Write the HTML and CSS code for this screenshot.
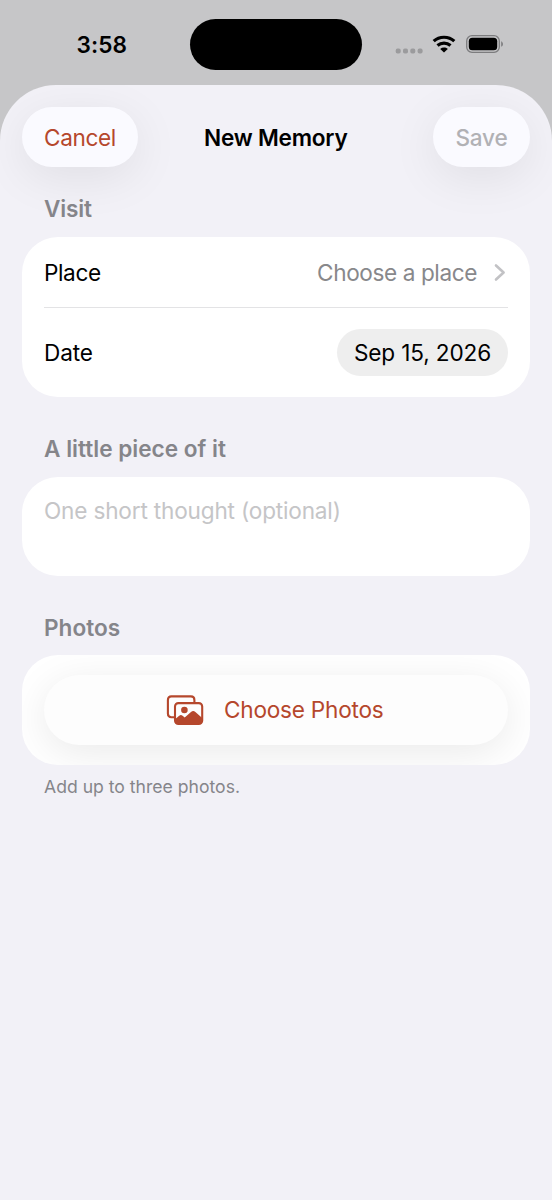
FILE: index.html
```
<!DOCTYPE html>
<html lang="en">
<head>
<meta charset="utf-8">
<title>New Memory</title>
<link rel="stylesheet" href="styles.css">
</head>
<body>
<div class="screen">
  <header class="status">
    <div class="time">3:58</div>
    <div class="island"></div>
    <div class="indicators">
      <svg class="dots" width="28" height="6" viewBox="0 0 28 6" fill="#9b9b9d"><rect x="0.7" y="0.6" width="5" height="5" rx="1.8"/><rect x="8" y="0.6" width="5" height="5" rx="1.8"/><rect x="15.3" y="0.6" width="5" height="5" rx="1.8"/><rect x="22.6" y="0.6" width="5" height="5" rx="1.8"/></svg>
      <svg class="wifi" width="24" height="18" viewBox="0 0 24 18"><g fill="none" stroke="#000" stroke-width="3.2"><path d="M1.7 6.2C7.4.9 16.6.9 22.3 6.2"/><path d="M5.5 10.5c3.7-3.2 9.3-3.2 13 0"/></g><path d="M12 17.6l-3.8-3.7c2.2-1.8 5.4-1.8 7.6 0z"/></svg>
      <svg class="battery" width="38" height="18" viewBox="0 0 38 18"><rect x=".7" y=".7" width="32.6" height="16.6" rx="5.3" fill="none" stroke="#7c7c7e" stroke-width="1.3"/><rect x="2.8" y="2.8" width="28.4" height="12.4" rx="3.5"/><path d="M35.2 6.2c2.3 1 2.3 4.6 0 5.6z" fill="#7c7c7e"/></svg>
    </div>
  </header>
  <main class="sheet">
    <nav class="toolbar">
      <button class="glass cancel"><span>Cancel</span></button>
      <h1 class="title">New Memory</h1>
      <button class="glass save"><span>Save</span></button>
    </nav>
    <section class="group visit">
      <h2 class="label l-visit">Visit</h2>
      <div class="card">
        <div class="row place">
          <span class="t-place">Place</span>
          <span class="value">Choose a place</span>
          <svg class="chevron" width="12" height="20" viewBox="0 0 12 20" fill="none" stroke="#c2c2c5" stroke-width="2.6" stroke-linecap="round" stroke-linejoin="round"><path d="M2 2.5l7.6 7L2 16.5"/></svg>
        </div>
        <div class="row date"><span class="t-date">Date</span><span class="pill"><span>Sep 15, 2026</span></span></div>
      </div>
    </section>
    <section class="group piece">
      <h2 class="label l-piece">A little piece of it</h2>
      <div class="card thought"><span>One short thought (optional)</span></div>
    </section>
    <section class="group photos">
      <h2 class="label l-photos">Photos</h2>
      <div class="card picker">
        <button class="choose">
          <svg class="photo-icon" width="38" height="32" viewBox="0 0 38 32"><path d="M8 23.2H5.4c-2.3 0-3.5-1.2-3.5-3.5V5.9c0-2.3 1.2-3.5 3.5-3.5h19.5c2.3 0 3.5 1.2 3.5 3.5v3.2" fill="none" stroke="#b5472c" stroke-width="2.1"/><rect x="9" y="9.1" width="27.2" height="20.8" rx="3.4" fill="none" stroke="#b5472c" stroke-width="2.1"/><circle cx="18.4" cy="16" r="3.3" fill="#b5472c"/><path d="M9 25.2l4.2-3.5c1.2-1 2.2-1 3.4 0l2.1 1.8 6.3-5.5c1.6-1.3 2.8-1.3 4.4 0l6.8 6v2.7c0 2.3-1 3.2-3.2 3.2H12.2c-2.2 0-3.2-.9-3.2-3.2z" fill="#b5472c"/></svg>
          <span>Choose Photos</span>
        </button>
      </div>
      <p class="footer">Add up to three photos.</p>
    </section>
  </main>
</div>
</body>
</html>
```
FILE: styles.css
```
* { box-sizing: border-box; }
body {
  margin: 0;
  background: #c6c6c8;
  color: #000;
  font: 400 22.6px/30px Inter, "Liberation Sans", sans-serif;
}
h1, h2, p { margin: 0; font-size: inherit; }
button { border: 0; padding: 0; font: inherit; }
span, h1, h2, p { white-space: nowrap; }
.screen { width: 552px; height: 1200px; overflow: hidden; display: flex; flex-direction: column; }
.status {
  height: 85px;
  flex: none;
  padding: 19px 48px 0 76.5px;
  display: grid;
  grid-template-columns: 113.5px 172px 1fr;
  align-items: start;
}
.time { font-weight: 600; line-height: 52px; letter-spacing: .1px; }
.island { height: 51px; border-radius: 26px; background: #000; }
.indicators { display: flex; justify-content: flex-end; padding-top: 16px; }
.dots { margin: 12.5px 9px 0 0; }
.wifi { margin: 0 10px 0 0; }
.battery { margin-top: .3px; }
.sheet {
  flex: 1;
  background: #f2f1f7;
  border-radius: 56px 56px 0 0;
  padding: 22px 22px 0;
  overflow: hidden;
}
.toolbar { height: 60px; display: grid; grid-template-columns: 116px 1fr 97px; align-items: center; }
.title { font-weight: 600; padding: 2px 0 0 66px; letter-spacing: -.22px; }
.glass {
  height: 60px;
  border-radius: 30px;
  background: #fafaff;
  box-shadow: 0 10px 48px rgba(0, 0, 0, .08);
  padding-top: 2px;
}
.cancel { color: #b5472c; letter-spacing: -.35px; }
.save { color: #b1b1b5; font-weight: 500; letter-spacing: -.2px; }
.group { display: flex; flex-direction: column; }
.label { color: #85858a; font-weight: 600; padding-left: 22px; height: 30px; }
.l-visit { letter-spacing: -.2px; }
.visit { padding-top: 27px; }
.card { background: #fff; border-radius: 36px; margin-top: 13px; padding: 0 22px; }
.visit .card { height: 159.5px; }
.row { display: flex; align-items: center; }
.place { height: 71px; padding-top: 1px; border-bottom: 1px solid #e3e3e5; letter-spacing: -.4px; }
.place span { padding-top: 1px; }
.value { color: #88888b; margin-left: auto; }
.chevron { margin: 0 2px 0 17px; }
.date { height: 89px; justify-content: space-between; letter-spacing: -.15px; }
.pill { width: 171px; height: 47px; border-radius: 24px; background: #eee; display: flex; align-items: center; justify-content: center; }
.piece { padding-top: 37px; }
.thought { height: 99px; padding-top: 19px; color: #c5c5c7; letter-spacing: -.18px; }
.photos { padding-top: 37px; }
.picker { height: 110px; margin-top: 12.5px; padding: 19.5px 22px; overflow: hidden; }
.choose {
  width: 464px;
  height: 70px;
  border-radius: 35px;
  background: #fdfdfd;
  color: #b5472c;
  box-shadow: 0 8px 40px rgba(0, 0, 0, .085);
  display: flex;
  align-items: center;
  padding-left: 122px;
  letter-spacing: -.22px;
}
.photo-icon { margin-right: 20px; }
.footer { color: #85858a; font-size: 17.6px; line-height: 24px; padding: 10px 0 0 22px; }
```
